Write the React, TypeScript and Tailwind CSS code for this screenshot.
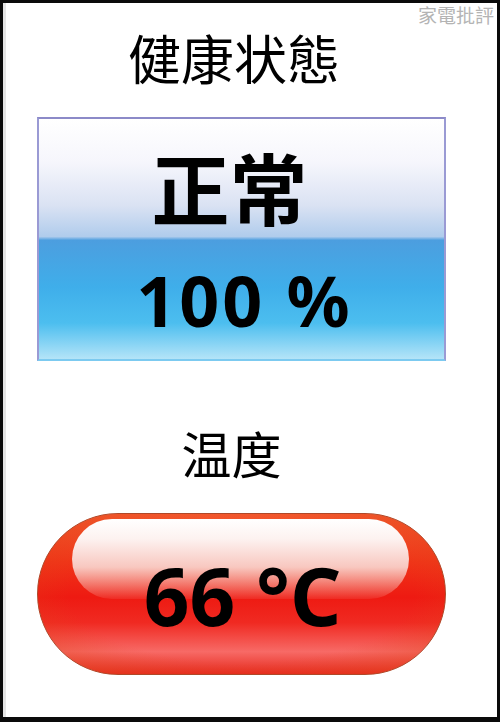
import React from "react";

const cjk = "font-['Noto_Sans_CJK_TC','Noto_Sans_CJK_JP',sans-serif]";

export default function App() {
  return (
    <div className="w-[500px] h-[722px] bg-[#0a0a0a] pl-[3px] pt-[3px] pr-[3px] pb-[5px]">
      <div className="relative w-full h-full bg-white border-l-[3px] border-[#e4e4e4] border-t-0 border-r-0 border-b-0 flex flex-col items-center">
        {/* watermark */}
        <div className={`absolute top-[2px] right-[3px] text-[19px] leading-none text-[#b4b4b4] ${cjk}`}>
          家電批評
        </div>

        {/* health status */}
        <div className={`mt-[26px] ml-[-35px] text-[53px] leading-[56px] text-black ${cjk}`}>健康状態</div>

        <div className="mt-[32px] ml-[-20px] w-[409px] h-[244px] border-2 border-t-[#8c8ac8] border-l-[#9a9ad4] border-r-[#9a9ad4] border-b-[#7ccaf0] bg-[linear-gradient(to_bottom,#ffffff_0%,#f6f6fc_18%,#dae2f3_36%,#b0ccec_49%,#4c9edf_50.5%,#3faeea_70%,#4cbeef_85%,#b4e4f8_100%)] flex flex-col items-center">
          <div className={`mt-[27px] ml-[-24px] text-[78px] leading-[80px] font-bold text-black ${cjk}`}>正常</div>
          <div className="mt-[36px] ml-[6px] text-[70px] leading-[76px] font-bold text-black font-['Noto_Sans',sans-serif] tracking-[3px]">
            100 %
          </div>
        </div>

        {/* temperature */}
        <div className={`mt-[63px] ml-[-40px] text-[50px] leading-[56px] text-black ${cjk}`}>温度</div>

        <div className="relative mt-[33px] ml-[-20px] w-[409px] h-[162px] rounded-full border border-[#b04828] overflow-hidden bg-[linear-gradient(to_bottom,#f45a30_0%,#f03418_30%,#ee1a12_52%,#f02a22_68%,#f76a66_86%,#e62a1e_100%)]">
          <div className="absolute inset-0 rounded-full bg-[radial-gradient(ellipse_at_center,transparent_60%,rgba(225,70,25,0.6)_100%)]" />
          <div className="absolute left-[34px] right-[36px] top-[5px] h-[80px] rounded-[60px] bg-[linear-gradient(to_bottom,#ffffff_0%,#fdf2f0_25%,#f8c8c0_60%,rgba(245,110,100,0.2)_100%)]" />
          <div className="relative h-full flex items-center justify-center">
            <span className="mt-[2px] ml-[2px] text-[80px] leading-none font-bold text-black font-['Noto_Sans',sans-serif]">
              66 °C
            </span>
          </div>
        </div>
      </div>
    </div>
  );
}
